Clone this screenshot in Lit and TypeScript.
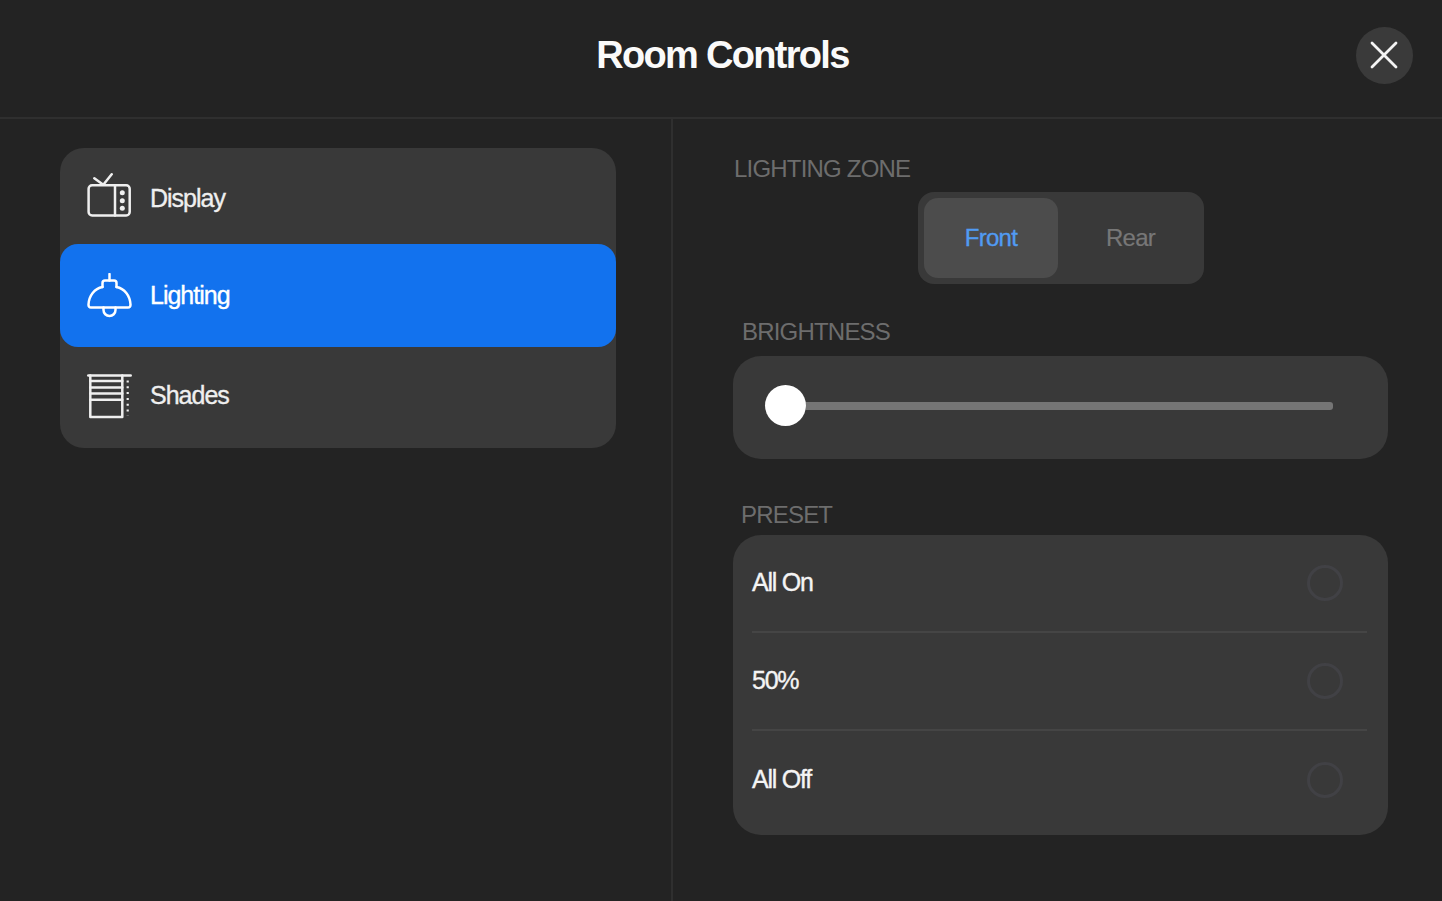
import { LitElement, html, css, svg } from "lit";
import { customElement } from "lit/decorators.js";

const tv = svg`<rect x="2.600" y="12.300" width="41.100" height="30.100" rx="3.500"/><path d="M29 12.300v30.100"/><path d="M8.300 5.300l9 6.500 M25.700 1.300l-8.400 10.500"/><circle cx="36.300" cy="19.700" r="2.500" fill="currentColor" stroke="none"/><circle cx="36.300" cy="27.700" r="2.500" fill="currentColor" stroke="none"/><circle cx="36.300" cy="35.300" r="2.500" fill="currentColor" stroke="none"/>`;
const bell = svg`<path d="M23.500 1v6.500"/><path d="M16.500 14v-4a2.500 2.500 0 0 1 2.500-2.500h9a2.500 2.500 0 0 1 2.500 2.500v4"/><path d="M16.500 14C8.500 15.500 3 22.500 2.500 31.500c-.1 1.800.8 3 2.500 3h37c1.700 0 2.600-1.200 2.500-3C44 22.500 38.500 15.500 30.500 14"/><path d="M17.500 34.500v2.500a6 6 0 0 0 12 0v-2.500"/>`;
const shade = svg`<path d="M2.300 2.500h42.400"/><path d="M4.300 2.500v41.500h32V2.500"/><path d="M4.300 8h32M4.300 14.500h32M4.300 20.500h32M4.300 26.800h32"/><path d="M41.700 7.500v35" stroke-dasharray="2 3.800" stroke-width="2.200" stroke-linecap="butt"/>`;

@customElement("app-root")
export class AppRoot extends LitElement {
  static styles = css`
    :host { display: block; width: 1442px; height: 901px; background: #232323; overflow: hidden;
      font-family: "Liberation Sans", Arial, sans-serif; color: #f2f2f2; }
    .header { height: 117px; border-bottom: 2px solid #2f2f2f; display: flex; align-items: center; justify-content: center; position: relative; }
    h1 { margin: 0 0 6px 3px; font-size: 38px; font-weight: 700; letter-spacing: -1.7px; color: #fafafa; }
    .close { position: absolute; left: 1356px; top: 27px; width: 57px; height: 57px; border-radius: 50%; background: #3a3a3a; display: flex; align-items: center; justify-content: center; }
    .close svg { width: 28px; height: 28px; stroke: #f4f4f4; stroke-width: 2.800; stroke-linecap: round; fill: none; margin: -1px 1px 0 0; }
    .body { display: flex; height: 782px; }
    .left { width: 673px; box-sizing: border-box; border-right: 2px solid #2f2f2f; padding: 29px 0 0 60px; flex: none; }
    .menu { width: 556px; height: 300px; border-radius: 24px; background: #393939; display: flex; flex-direction: column; }
    .item { display: flex; align-items: center; gap: 18px; padding-left: 26px; font-size: 25px; letter-spacing: -1px; color: #efefef; -webkit-text-stroke: 0.35px currentColor; height: 96px; box-sizing: border-box; }
    .item.first .name { padding-top: 4px; }
    .item.on { height: 103px; background: #1272ee; border-radius: 18px; color: #fff; }
    .item.last { height: 101px; padding-bottom: 4px; }
    .item svg { width: 46px; height: 46px; fill: none; stroke: currentColor; stroke-width: 2.500; stroke-linecap: round; stroke-linejoin: round; flex: none; }
    .right { flex: 1; padding: 36px 0 0 60px; }
    .label { font-size: 24px; line-height: 28px; letter-spacing: -0.8px; color: #6d6d6d; text-transform: uppercase; }
    .zone { margin-left: 1px; }
    .seg { margin: 9px 0 0 185px; width: 286px; height: 92px; box-sizing: border-box; padding: 6px; border-radius: 16px; background: #393939; display: flex; font-size: 24px; letter-spacing: -0.75px; }
    .seg div { display: flex; align-items: center; justify-content: center; border-radius: 14px; }
    .seg .front { width: 134px; height: 80px; background: #4c4c4c; color: #519bf3; -webkit-text-stroke: 0.35px currentColor; }
    .seg .rear { flex: 1; color: #777; padding-left: 5px; -webkit-text-stroke: 0.2px currentColor; }
    .bri { margin: 34px 0 0 9px; }
    .slider-card { margin-top: 10px; width: 655px; height: 103px; border-radius: 28px; background: #393939; box-sizing: border-box; padding: 0 55px 4px 32px; display: flex; align-items: center; }
    .thumb { width: 41px; height: 41px; border-radius: 50%; background: #fff; flex: none; }
    .track { flex: 1; height: 8px; background: #757575; border-radius: 0 3px 3px 0; }
    .pre { margin: 42px 0 0 8px; }
    .presets { margin-top: 6px; width: 655px; height: 300px; border-radius: 28px; background: #393939; box-sizing: border-box; padding: 0 21px 0 19px; display: flex; flex-direction: column; }
    .row { height: 98px; flex: none; display: flex; align-items: center; justify-content: space-between; font-size: 25px; letter-spacing: -1.25px; color: #f4f4f4; -webkit-text-stroke: 0.35px currentColor; border-bottom: 2px solid #454545; box-sizing: border-box; padding-right: 24px; }
    .row:last-child { border-bottom: 0; }
    .row span.t { margin-top: -1px; }
    .radio { width: 36px; height: 36px; box-sizing: border-box; border: 3px solid #414145; border-radius: 50%; }
  `;

  render() {
    return html`
      <div class="header">
        <h1>Room Controls</h1>
        <div class="close"><svg viewBox="0 0 28 28"><path d="M2 2l24 24M26 2L2 26"/></svg></div>
      </div>
      <div class="body">
        <div class="left">
          <div class="menu">
            <div class="item first"><svg viewBox="0 0 46 46">${tv}</svg><span class="name">Display</span></div>
            <div class="item on"><svg viewBox="0 0 46 46">${bell}</svg><span class="name">Lighting</span></div>
            <div class="item last"><svg viewBox="0 0 46 46">${shade}</svg><span class="name">Shades</span></div>
          </div>
        </div>
        <div class="right">
          <div class="label zone">Lighting Zone</div>
          <div class="seg"><div class="front">Front</div><div class="rear">Rear</div></div>
          <div class="label bri">Brightness</div>
          <div class="slider-card"><div class="thumb"></div><div class="track"></div></div>
          <div class="label pre">Preset</div>
          <div class="presets">
            ${["All On", "50%", "All Off"].map((t) => html`<div class="row"><span class="t">${t}</span><span class="radio"></span></div>`)}
          </div>
        </div>
      </div>
    `;
  }
}
